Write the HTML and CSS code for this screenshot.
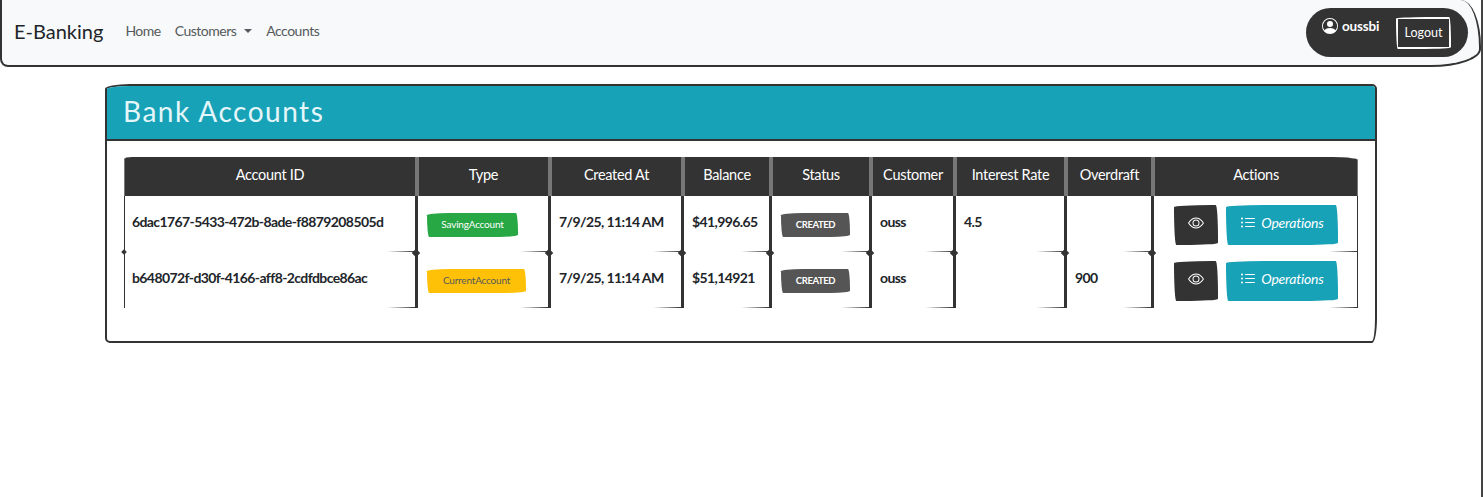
FILE: index.html
```html
<!DOCTYPE html>
<html lang="en">

<head>
	<meta name="viewport" content="width=device-width, initial-scale=1">
	<title>E-Banking</title>
	<link rel="stylesheet" href="styles.css">
</head>

<body>
	<header class="navbar">
		<a class="brand" href="#">E-Banking</a>
		<ul class="nav-links">
			<li><a href="#">Home</a></li>
			<li><a href="#" class="dropdown">Customers</a></li>
			<li><a href="#">Accounts</a></li>
		</ul>
		<div class="user-box">
			<span class="user-name">
				<svg class="user-icon" viewBox="0 0 16 16" fill="currentColor">
					<path d="M11 6a3 3 0 1 1-6 0 3 3 0 0 1 6 0z" />
					<path fill-rule="evenodd" d="M0 8a8 8 0 1 1 16 0A8 8 0 0 1 0 8zm8-7a7 7 0 0 0-5.468 11.37C3.242 11.226 4.805 10 8 10s4.757 1.225 5.468 2.37A7 7 0 0 0 8 1z" />
				</svg>
				oussbi
			</span>
			<button class="logout">Logout</button>
		</div>
	</header>
	<main class="card">
		<h2 class="card-header">Bank Accounts</h2>
		<div class="card-body">
			<table class="accounts">
				<colgroup>
					<col class="c-id">
					<col class="c-type">
					<col class="c-date">
					<col class="c-balance">
					<col class="c-status">
					<col class="c-customer">
					<col class="c-rate">
					<col class="c-overdraft">
					<col class="c-actions">
				</colgroup>
				<thead>
					<tr>
						<th>Account ID</th>
						<th>Type</th>
						<th>Created At</th>
						<th>Balance</th>
						<th>Status</th>
						<th>Customer</th>
						<th>Interest Rate</th>
						<th>Overdraft</th>
						<th>Actions</th>
					</tr>
				</thead>
				<tbody>
					<tr>
						<td>6dac1767-5433-472b-8ade-f8879208505d</td>
						<td><span class="badge badge-green">SavingAccount</span></td>
						<td>7/9/25, 11:14 AM</td>
						<td>$41,996.65</td>
						<td><span class="badge badge-grey">CREATED</span></td>
						<td>ouss</td>
						<td>4.5</td>
						<td></td>
						<td>
							<div class="actions">
								<button class="btn btn-dark">
									<svg class="icon" viewBox="0 0 16 16" fill="currentColor">
										<path d="M16 8s-3-5.500-8-5.500S0 8 0 8s3 5.500 8 5.500S16 8 16 8zM1.173 8a13.133 13.133 0 0 1 1.660-2.043C4.120 4.668 5.880 3.500 8 3.500c2.120 0 3.879 1.168 5.168 2.457A13.133 13.133 0 0 1 14.828 8c-.058.087-.122.183-.195.288-.335.480-.830 1.120-1.465 1.755C11.879 11.332 10.119 12.500 8 12.500c-2.120 0-3.879-1.168-5.168-2.457A13.134 13.134 0 0 1 1.172 8z" />
										<path d="M8 5.500a2.500 2.500 0 1 0 0 5 2.500 2.500 0 0 0 0-5zM4.500 8a3.500 3.500 0 1 1 7 0 3.500 3.500 0 0 1-7 0z" />
									</svg>
								</button>
								<button class="btn btn-teal">
									<svg class="icon" viewBox="0 0 16 16" fill="currentColor">
										<path fill-rule="evenodd" d="M5 11.500a.500.500 0 0 1 .500-.500h9a.500.500 0 0 1 0 1h-9a.500.500 0 0 1-.500-.500zm0-4a.500.500 0 0 1 .500-.500h9a.500.500 0 0 1 0 1h-9a.500.500 0 0 1-.500-.500zm0-4a.500.500 0 0 1 .500-.500h9a.500.500 0 0 1 0 1h-9a.500.500 0 0 1-.500-.500zm-3 1a1 1 0 1 0 0-2 1 1 0 0 0 0 2zm0 4a1 1 0 1 0 0-2 1 1 0 0 0 0 2zm0 4a1 1 0 1 0 0-2 1 1 0 0 0 0 2z" />
									</svg>
									<em>Operations</em>
								</button>
							</div>
						</td>
					</tr>
					<tr>
						<td>b648072f-d30f-4166-aff8-2cdfdbce86ac</td>
						<td><span class="badge badge-yellow">CurrentAccount</span></td>
						<td>7/9/25, 11:14 AM</td>
						<td>$51,14921</td>
						<td><span class="badge badge-grey">CREATED</span></td>
						<td>ouss</td>
						<td></td>
						<td>900</td>
						<td>
							<div class="actions">
								<button class="btn btn-dark">
									<svg class="icon" viewBox="0 0 16 16" fill="currentColor">
										<path d="M16 8s-3-5.500-8-5.500S0 8 0 8s3 5.500 8 5.500S16 8 16 8zM1.173 8a13.133 13.133 0 0 1 1.660-2.043C4.120 4.668 5.880 3.500 8 3.500c2.120 0 3.879 1.168 5.168 2.457A13.133 13.133 0 0 1 14.828 8c-.058.087-.122.183-.195.288-.335.480-.830 1.120-1.465 1.755C11.879 11.332 10.119 12.500 8 12.500c-2.120 0-3.879-1.168-5.168-2.457A13.134 13.134 0 0 1 1.172 8z" />
										<path d="M8 5.500a2.500 2.500 0 1 0 0 5 2.500 2.500 0 0 0 0-5zM4.500 8a3.500 3.500 0 1 1 7 0 3.500 3.500 0 0 1-7 0z" />
									</svg>
								</button>
								<button class="btn btn-teal">
									<svg class="icon" viewBox="0 0 16 16" fill="currentColor">
										<path fill-rule="evenodd" d="M5 11.500a.500.500 0 0 1 .500-.500h9a.500.500 0 0 1 0 1h-9a.500.500 0 0 1-.500-.500zm0-4a.500.500 0 0 1 .500-.500h9a.500.500 0 0 1 0 1h-9a.500.500 0 0 1-.500-.500zm0-4a.500.500 0 0 1 .500-.500h9a.500.500 0 0 1 0 1h-9a.500.500 0 0 1-.500-.500zm-3 1a1 1 0 1 0 0-2 1 1 0 0 0 0 2zm0 4a1 1 0 1 0 0-2 1 1 0 0 0 0 2zm0 4a1 1 0 1 0 0-2 1 1 0 0 0 0 2z" />
									</svg>
									<em>Operations</em>
								</button>
							</div>
						</td>
					</tr>
				</tbody>
			</table>
		</div>
	</main>
</body>

</html>
```

FILE: styles.css
```css
* {
	box-sizing: border-box;
}

html,
body {
	margin: 0;
	background-color: #fff;
	color: #212529;
	font-family: "Lato", "Liberation Sans", sans-serif;
	font-size: 14px;
}

body {
	height: 100vh;
	border-right: 2px solid #444;
	overflow: hidden;
}

/* navbar */
.navbar {
	display: flex;
	align-items: center;
	width: 1481px;
	height: 67px;
	padding: 0 11px 4px 12px;
	background-color: #f8f9fa;
	border: 2px solid #333;
	border-top: 0;
	border-radius: 0 20px 50px 8px / 0 47px 18px 8px;
}

.brand {
	margin-right: 22px;
	color: #212529;
	font-size: 20px;
	text-decoration: none;
}

.nav-links {
	display: flex;
	gap: 14px;
	margin: 0;
	padding: 0;
	list-style: none;
}

.nav-links a {
	color: #55595c;
	font-size: 14px;
	letter-spacing: -0.5px;
	text-decoration: none;
}

.dropdown:after {
	content: "";
	display: inline-block;
	margin-left: 8px;
	vertical-align: 3px;
	border-top: 4px solid;
	border-left: 4px solid transparent;
	border-right: 4px solid transparent;
}

.user-box {
	display: flex;
	align-items: center;
	justify-content: space-between;
	width: 162px;
	height: 49px;
	margin-top: 4px;
	margin-left: auto;
	padding: 0 17px 0 16px;
	background-color: #333;
	color: #fff;
	border-radius: 25px;
}

.user-name {
	display: flex;
	align-items: center;
	gap: 4px;
	margin-top: -13px;
	font-size: 13.500px;
	font-weight: 700;
	letter-spacing: -0.2px;
}

.user-icon {
	width: 16px;
	height: 16px;
}

.logout {
	width: 55px;
	height: 32px;
	padding: 0;
	background: none;
	color: #fff;
	font-family: inherit;
	font-size: 12.500px;
	border: 2px solid #fff;
	border-radius: 255px 15px 225px 15px / 15px 225px 15px 255px;
}

/* card */
.card {
	width: 1272px;
	height: 259px;
	margin: 17px 0 0 105px;
	border: 2px solid #333;
	border-radius: 25px 5px 5px 5px / 5px 5px 25px 5px;
	overflow: hidden;
}

.card-header {
	height: 55px;
	margin: 0;
	padding: 0 16px;
	background-color: #17a2b8;
	color: #e4f6f9;
	font-size: 28px;
	font-weight: 400;
	letter-spacing: 1.5px;
	line-height: 50px;
	border-bottom: 2px solid #333;
}

.card-body {
	padding: 16px 17px;
}

/* table */
.accounts {
	width: 1234px;
	table-layout: fixed;
	border-collapse: separate;
	border-spacing: 0;
	font-size: 14px;
}

.c-id { width: 291px; }
.c-type { width: 133px; }
.c-date { width: 133px; }
.c-balance { width: 88px; }
.c-status { width: 100px; }
.c-customer { width: 84px; }
.c-rate { width: 111px; }
.c-overdraft { width: 87px; }
.c-actions { width: 207px; }

.accounts th {
	height: 39px;
	padding: 0 0 5px;
	background-color: #333;
	color: #fff;
	font-size: 14.500px;
	font-weight: 400;
	letter-spacing: -0.3px;
	text-align: center;
	border-left: 4px solid #777;
}

.accounts th:first-child {
	border-left-width: 1px;
	border-top-left-radius: 8px 2px;
}

.accounts th:last-child {
	border-right: 1px solid #777;
	border-top-right-radius: 25px 3px;
}

.accounts td {
	position: relative;
	height: 56px;
	padding: 0 8px 5px;
	color: #212529;
	font-weight: 700;
	letter-spacing: -0.6px;
	vertical-align: middle;
	white-space: nowrap;
	border-left: 3px solid #333;
	background:
		linear-gradient(to left, #333, #fff 28px) bottom / 100% 1px no-repeat;
}

/* little knots where the hand drawn lines cross */
.accounts tr + tr td:before {
	content: "";
	position: absolute;
	top: -2px;
	left: -5px;
	width: 6px;
	height: 6px;
	background-color: #333;
	transform: rotate(45deg);
}

.accounts td:first-child {
	border-left-width: 1px;
	padding-left: 7px;
}

.accounts td:first-child:before {
	left: -3px;
	width: 4px;
	height: 4px;
}

.accounts td:last-child {
	border-right: 1px solid #333;
}

.badge {
	display: block;
	width: 91px;
	height: 24px;
	margin: 7px 0 0 1px;
	font-size: 10px;
	font-weight: 400;
	letter-spacing: -0.2px;
	line-height: 23px;
	text-align: center;
	border-radius: 255px 25px 225px 25px / 25px 225px 25px 255px;
}

.badge-green {
	background-color: #28a745;
	color: #fff;
}

.badge-yellow {
	width: 99px;
	background-color: #ffc107;
	color: #55595c;
}

.badge-grey {
	width: 69px;
	background-color: #555;
	color: #fff;
	font-size: 9.500px;
	font-weight: 700;
	letter-spacing: -0.4px;
}

.actions {
	display: flex;
	align-items: center;
	gap: 8px;
	margin-top: 7px;
	padding-left: 12px;
}

.btn {
	display: flex;
	align-items: center;
	justify-content: center;
	height: 40px;
	padding: 0 0 5px;
	color: #fff;
	font-family: inherit;
	border: 0;
	border-radius: 255px 15px 225px 15px / 15px 225px 15px 255px;
}

.btn-dark {
	width: 44px;
	background-color: #333;
}

.btn-teal {
	gap: 5px;
	width: 112px;
	background-color: #17a2b8;
	font-size: 14px;
	letter-spacing: -0.2px;
}

.icon {
	width: 16px;
	height: 16px;
}
```
